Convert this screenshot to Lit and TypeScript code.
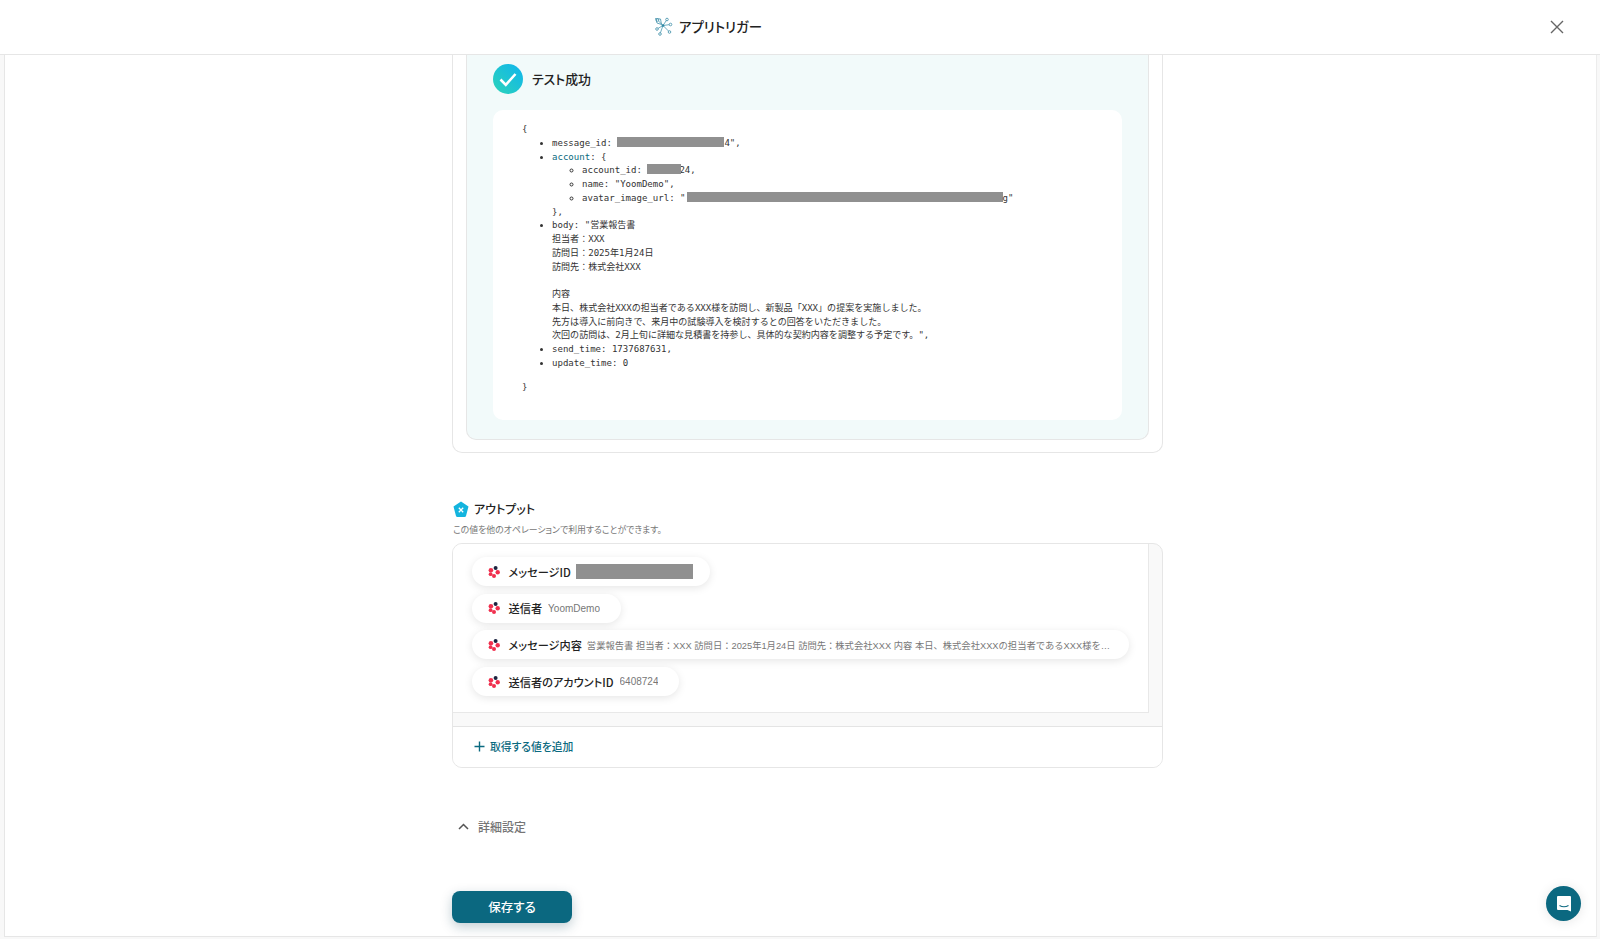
import { LitElement, html, css, svg } from "lit";
import { customElement } from "lit/decorators.js";

const yoomMark = html`<svg class="mark" viewBox="0 0 12 12" aria-hidden="true">
  <circle cx="7.6" cy="2" r="2" fill="#1c2340"/>
  <circle cx="2.9" cy="4.2" r="2.3" fill="#f0304e"/>
  <circle cx="9.7" cy="6.3" r="2.2" fill="#f0304e"/>
  <circle cx="2.6" cy="8.2" r="1.9" fill="#f0304e"/>
  <circle cx="6" cy="10" r="2" fill="#f0304e"/>
</svg>`;

const nodes: [number, number][] = [[3.5, 3], [13, 2.5], [16.5, 7.5], [15.5, 15], [3, 12], [6, 17]];
const logo = html`<svg class="logo" viewBox="0 0 19 19" aria-hidden="true">
  ${nodes.map(([x, y]) => svg`<line x1="9" y1="8.5" x2=${x} y2=${y} stroke="#4a9ab3" stroke-width=".8"/>
    <circle cx=${x} cy=${y} r="1.3" fill="#fff" stroke="#3d8ea8" stroke-width=".8"/>`)}
  <path d="M1.5 1.5 L6.5 2 L7.5 7.5 L3 6 Z" fill="none" stroke="#3d8ea8" stroke-width=".8"/>
  <circle cx="9" cy="8.5" r="1.3" fill="#2f86a3"/>
</svg>`;

@customElement("app-root")
export class AppRoot extends LitElement {
  static styles = css`
    :host {
      display: block;
      height: 939px;
      overflow: hidden;
      position: relative;
      font-family: "Noto Sans CJK JP", "Noto Sans", sans-serif;
      color: #222;
      font-feature-settings: "palt";
    }
    .frame {
      height: 939px;
      display: flex;
      flex-direction: column;
      background: #f8f8f8;
    }
    header {
      height: 55px;
      flex: none;
      box-sizing: border-box;
      background: #fff;
      border-bottom: 1px solid #e6e6e6;
      display: flex;
      align-items: center;
      justify-content: space-between;
      padding: 0 36px 2px 654px;
    }
    .brand {
      display: flex;
      align-items: center;
      gap: 6px;
      font-size: 13.4px;
      font-weight: 500;
    }
    .logo { width: 19px; height: 19px; }
    .close { width: 14px; height: 14px; display: block; margin-top: 1px; }
    main {
      flex: 1;
      min-height: 0;
      overflow: hidden;
      margin: 0 3px 2px 4px;
      background: #fff;
      border-left: 1px solid #e6e6e6;
      border-right: 1px solid #ececec;
      border-bottom: 1px solid #e6e6e6;
      padding-left: 447px;
    }
    .col { width: 711px; display: flex; flex-direction: column; }
    .card {
      border: 1px solid #e6e6e6;
      border-top: 0;
      border-radius: 0 0 10px 10px;
      padding: 0 13px 12px;
      height: 398px;
      box-sizing: border-box;
    }
    .result {
      height: 385px;
      box-sizing: border-box;
      background: #f2fafa;
      border: 1px solid #e6e6e6;
      border-top: 0;
      border-radius: 0 0 10px 10px;
      padding: 8px 26px 0 26px;
      display: flex;
      flex-direction: column;
      gap: 16px;
    }
    .status {
      display: flex;
      align-items: center;
      gap: 9px;
      font-size: 12.9px;
      font-weight: 500;
      height: 31px;
    }
    .check { width: 30px; height: 30px; display: block; }
    .code {
      height: 310px;
      box-sizing: border-box;
      background: #fff;
      border-radius: 10px;
      padding: 13px 0 0 29px;
      font-family: "DejaVu Sans Mono", "Noto Sans CJK JP", monospace;
      font-size: 9.05px;
      line-height: 13.75px;
      color: #333;
      font-feature-settings: normal;
      white-space: pre;
    }
    .code ul { margin: 0; padding: 0 0 0 30px; }
    .code > ul { margin-bottom: 10.5px; }
    .key { color: #0b6a80; }
    .redact {
      display: inline-block;
      height: 10px;
      background: #909090;
      vertical-align: -1px;
    }
    .r-msg { width: 107px; }
    .r-acct { width: 34px; position: relative; margin-right: -2px; }
    .r-url { width: 316px; margin-left: 1px; }
    .output-title {
      display: flex;
      align-items: center;
      gap: 5px;
      margin: 46.5px 0 0 1px;
      font-size: 12px;
      font-weight: 500;
      height: 18px;
    }
    .pent { width: 16px; height: 17px; display: block; margin-top: 2px; }
    .desc {
      font-size: 8.9px;
      color: #777;
      margin: 5.5px 0 0 1px;
      height: 14px;
      line-height: 14px;
    }
    .box {
      margin-top: 6px;
      height: 225px;
      box-sizing: border-box;
      border: 1px solid #e6e6e6;
      border-radius: 10px;
      background: #f9f9f9;
      display: flex;
      flex-direction: column;
      overflow: hidden;
    }
    .list {
      height: 169px;
      flex: none;
      box-sizing: border-box;
      margin-right: 13px;
      background: #fff;
      border-right: 1px solid #e8e8e8;
      border-bottom: 1px solid #e8e8e8;
      padding: 13px 0 0 19px;
      display: flex;
      flex-direction: column;
      align-items: flex-start;
      gap: 7.7px;
    }
    .pill {
      height: 29px;
      box-sizing: border-box;
      border-radius: 15px;
      background: #fff;
      box-shadow: 0 2px 8px rgba(0, 0, 0, 0.1);
      display: flex;
      align-items: center;
      padding: 0 21px 0 16px;
      font-size: 11.2px;
      font-weight: 500;
      white-space: nowrap;
      flex: none;
    }
    .pill.wide { width: 657px; padding-right: 18px; }
    .mark { width: 12px; height: 12px; margin-right: 8.5px; flex: none; }
    .val {
      font-family: "Liberation Sans", "Noto Sans CJK JP", sans-serif;
      font-size: 10px;
      font-weight: 400;
      color: #777;
      margin-left: 6px;
      overflow: hidden;
      text-overflow: ellipsis;
      min-width: 0;
      font-feature-settings: normal;
    }
    .wide .val { font-size: 9.3px; margin-left: 5px; }
    .pill-redact {
      width: 117px;
      height: 15px;
      background: #909090;
      margin: 0 -4px 0 5px;
    }
    .add {
      margin-top: 13px;
      flex: 1;
      background: #fff;
      border-top: 1px solid #e4e4e4;
      display: flex;
      align-items: center;
      gap: 5px;
      padding: 0 0 2px 21px;
      font-size: 10.8px;
      font-weight: 500;
      color: #0b6a80;
    }
    .plus { width: 11px; height: 11px; display: block; }
    .details {
      display: flex;
      align-items: center;
      gap: 9px;
      margin: 48px 0 0 6px;
      height: 20px;
      font-size: 12px;
      font-weight: 500;
      color: #757575;
    }
    .chev { width: 11px; height: 7px; display: block; }
    .save {
      margin-top: 55px;
      width: 120px;
      height: 32px;
      border: 0;
      border-radius: 8px;
      background: #0b6880;
      color: #fff;
      font: inherit;
      font-size: 12.5px;
      font-weight: 500;
      box-shadow: 0 4px 12px rgba(11, 60, 80, 0.25);
      padding: 0 0 2px;
    }
    .fab {
      position: absolute;
      left: 1546px;
      top: 886px;
      width: 35px;
      height: 35px;
      border-radius: 50%;
      background: #0b6880;
      box-shadow: 0 1px 12px rgba(0, 0, 0, 0.1);
      display: flex;
      align-items: center;
      justify-content: center;
    }
    .fab svg { width: 16px; height: 18px; display: block; }
  `;

  render() {
    return html`<div class="frame">
      <header>
        <div class="brand">${logo}<span>アプリトリガー</span></div>
        <svg class="close" viewBox="0 0 14 14" aria-label="閉じる"><path d="M1 1 L13 13 M13 1 L1 13" stroke="#666" stroke-width="1.4" fill="none"/></svg>
      </header>
      <main>
        <div class="col">
          <section class="card">
            <div class="result">
              <div class="status">
                <svg class="check" viewBox="0 0 30 30" aria-hidden="true">
                  <defs><linearGradient id="g" x1="0" y1="1" x2="1" y2="0"><stop offset="0" stop-color="#2dd4b8"/><stop offset="1" stop-color="#0fb4ee"/></linearGradient></defs>
                  <circle cx="15" cy="15" r="15" fill="url(#g)"/>
                  <path d="M7.5 15.5 L12.8 20.8 L22.5 10" fill="none" stroke="#fff" stroke-width="2.6"/>
                </svg>
                <span>テスト成功</span>
              </div>
              <div class="code">{<ul><li>message_id: <span class="redact r-msg"></span>4",</li><li><span class="key">account</span>: {<ul><li>account_id: <span class="redact r-acct"></span>24,</li><li>name: "YoomDemo",</li><li>avatar_image_url: "<span class="redact r-url"></span>g"</li></ul>},</li><li>body: "営業報告書
担当者：XXX
訪問日：2025年1月24日
訪問先：株式会社XXX

内容
本日、株式会社XXXの担当者であるXXX様を訪問し、新製品「XXX」の提案を実施しました。
先方は導入に前向きで、来月中の試験導入を検討するとの回答をいただきました。
次回の訪問は、2月上旬に詳細な見積書を持参し、具体的な契約内容を調整する予定です。",</li><li>send_time: 1737687631,</li><li>update_time: 0</li></ul>}</div>
            </div>
          </section>

          <div class="output-title">
            <svg class="pent" viewBox="0 0 16 17" aria-hidden="true">
              <path d="M8 .5 L15.5 5.5 L13 15 Q12.8 16 11.5 16 L4.5 16 Q3.2 16 3 15 L.5 5.5 Z" fill="#14b4de"/>
              <path d="M5.8 6.8 L10.2 11.2 M10.2 6.8 L5.8 11.2" stroke="#fff" stroke-width="1.3"/>
            </svg>
            <span>アウトプット</span>
          </div>
          <div class="desc">この値を他のオペレーションで利用することができます。</div>

          <div class="box">
            <div class="list">
              <div class="pill">${yoomMark}メッセージID<span class="pill-redact"></span></div>
              <div class="pill">${yoomMark}送信者<span class="val">YoomDemo</span></div>
              <div class="pill wide">${yoomMark}メッセージ内容<span class="val">営業報告書 担当者：XXX 訪問日：2025年1月24日 訪問先：株式会社XXX 内容 本日、株式会社XXXの担当者であるXXX様を訪問し、新製品「XXX」の提案を実施しました。</span></div>
              <div class="pill">${yoomMark}送信者のアカウントID<span class="val">6408724</span></div>
            </div>
            <div class="add">
              <svg class="plus" viewBox="0 0 11 11" aria-hidden="true"><path d="M5.5 .5 V10.5 M.5 5.5 H10.5" stroke="#0b6a80" stroke-width="1.4"/></svg>
              <span>取得する値を追加</span>
            </div>
          </div>

          <div class="details">
            <svg class="chev" viewBox="0 0 11 7" aria-hidden="true"><path d="M1 6 L5.5 1.5 L10 6" fill="none" stroke="#555" stroke-width="1.5"/></svg>
            <span>詳細設定</span>
          </div>

          <div><button class="save">保存する</button></div>
        </div>
      </main>
      <div class="fab">
        <svg viewBox="0 0 16 18" aria-hidden="true">
          <path d="M2 1 H14 Q15 1 15 2 V16.5 L11.5 15 H2 Q1 15 1 14 V2 Q1 1 2 1 Z" fill="#fff"/>
          <path d="M3.5 10.5 Q8 13 12.5 10.5" fill="none" stroke="#0b6880" stroke-width="1.1"/>
        </svg>
      </div>
    </div>`;
  }
}
